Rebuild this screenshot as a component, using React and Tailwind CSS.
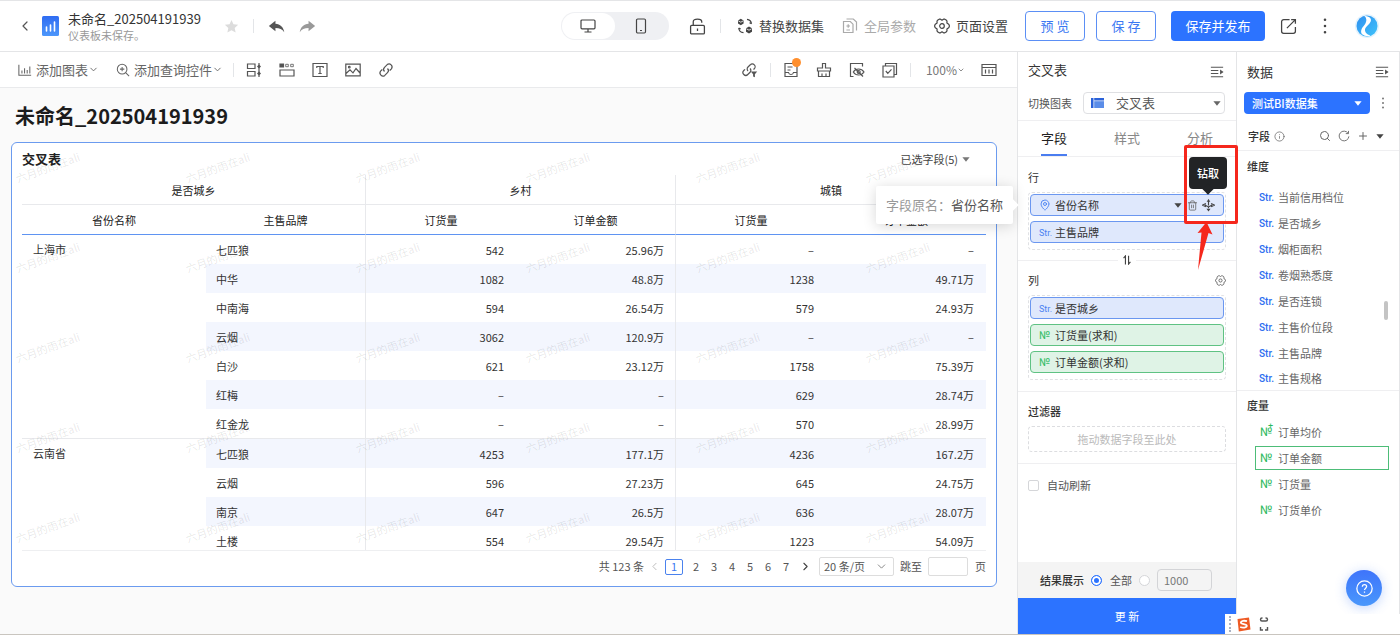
import React, { useState } from 'react';
import { ChevronDown, ChevronLeft, ChevronRight, Search, Plus, MapPin, Trash2, Info } from 'lucide-react';

const rows = [
  ['七匹狼', '542', '25.96万', '–', '–'],
  ['中华', '1082', '48.8万', '1238', '49.71万'],
  ['中南海', '594', '26.54万', '579', '24.93万'],
  ['云烟', '3062', '120.9万', '–', '–'],
  ['白沙', '621', '23.12万', '1758', '75.39万'],
  ['红梅', '–', '–', '629', '28.74万'],
  ['红金龙', '–', '–', '570', '28.99万'],
  ['七匹狼', '4253', '177.1万', '4236', '167.2万'],
  ['云烟', '596', '27.23万', '645', '24.75万'],
  ['南京', '647', '26.5万', '636', '28.07万'],
  ['土楼', '554', '29.54万', '1223', '54.09万'],
];

// first row index -> province and number of rows it covers
const provinces = {
  0: { name: '上海市', span: 7 },
  7: { name: '云南省', span: 4 },
};

const dimensions = ['当前信用档位', '是否城乡', '烟柜面积', '卷烟熟悉度', '是否连锁', '主售价位段', '主售品牌', '主售规格'];
const measures = ['订单均价', '订单金额', '订货量', '订货单价'];
const watermarks = Array.from({ length: 30 }, (_, i) => i);

const Svg = ({ size = 16, className = '', children }) => (
  <svg
    width={size}
    height={size}
    viewBox="0 0 16 16"
    fill="none"
    stroke="currentColor"
    strokeWidth="1.2"
    className={`shrink-0 ${className}`}
    aria-hidden="true"
  >
    {children}
  </svg>
);

const Caret = ({ className = '' }) => (
  <svg width="8" height="5" viewBox="0 0 8 5" fill="currentColor" className={`shrink-0 ${className}`} aria-hidden="true">
    <path d="M0.4 0.3h7.2L4 4.7z" />
  </svg>
);

const GearIcon = ({ size = 16 }) => (
  <Svg size={size}>
    <path d="M5.2 1.2h1.3L8 2.2l1.5-1h1.3l1.7 1 .5 1.1-.1 1.8 1.8 1.2.6 1.1v1.2l-.6 1.1-1.8 1.2.1 1.8-.5 1.1-1.7 1H9.5L8 13.8l-1.5 1H5.2l-1.7-1-.5-1.1.1-1.8-1.8-1.2-.6-1.1V7.400l.6-1.1 1.800-1.200L3 3.300l.5-1.100z" strokeLinejoin="round" />
    <circle cx="8" cy="8" r="2.300" />
  </Svg>
);

const CollapseIcon = () => (
  <Svg size={14}>
    <path d="M1 2.500h14M1 6.200h8.500M1 9.800h8.500M1 13.500h14" />
    <path d="M11.500 5.200v5.600L15.500 8z" fill="currentColor" stroke="none" />
  </Svg>
);

const Divider = () => <span className="h-3.5 w-px shrink-0 bg-[#e3e5e8]" />;

const Header = () => {
  const [device, setDevice] = useState('pc');

  return (
    <header className="flex h-[52px] shrink-0 items-center border-t border-b border-[#e4e5e7] bg-white pr-[21px] pl-[17px] text-[13px] text-[#444]">
      <button aria-label="返回" className="text-[#555]">
        <ChevronLeft size={16} strokeWidth={1.8} />
      </button>
      <svg width="18" height="20" viewBox="0 0 18 20" className="ml-[9px] shrink-0" aria-hidden="true">
        <defs>
          <linearGradient id="doc" x1="0" y1="0" x2="0" y2="1">
            <stop offset="0" stopColor="#2f6cf2" />
            <stop offset="1" stopColor="#4d97fb" />
          </linearGradient>
        </defs>
        <rect width="17" height="20" rx="1.500" fill="url(#doc)" />
        <path d="M4.500 15v-4M8.500 15V9M12.500 15V6" stroke="#fff" strokeWidth="1.600" strokeLinecap="round" />
      </svg>
      <div className="ml-2">
        <h1 className="text-[13px] leading-[17px] whitespace-nowrap text-[#333]">未命名_202504191939</h1>
        <p className="text-[11px] leading-4 text-[#999]">仪表板未保存。</p>
      </div>
      <button aria-label="收藏" className="ml-[23px] text-[#dcdcdc]">
        <Svg size={15}>
          <path d="M8 1l2.100 4.600 5 .6-3.700 3.400 1 4.900L8 12.100l-4.400 2.400 1-4.900L.9 6.200l5-.6z" fill="currentColor" stroke="none" />
        </Svg>
      </button>
      <span className="ml-3.5 flex items-center gap-3.5">
        <Divider />
        <button aria-label="撤销" className="text-[#555]">
          <Svg size={17}>
            <path d="M7 2.500v3c4.500.3 7.500 3 8.300 8-1.800-2.800-4.300-4-8.300-4v3L.8 7.500z" fill="currentColor" stroke="none" />
          </Svg>
        </button>
        <button aria-label="重做" className="text-[#999]">
          <Svg size={17} className="-scale-x-100">
            <path d="M7 2.500v3c4.500.3 7.500 3 8.300 8-1.800-2.800-4.300-4-8.300-4v3L.8 7.500z" fill="currentColor" stroke="none" />
          </Svg>
        </button>
      </span>

      <div className="ml-auto flex items-center">
        <div className="flex h-7 w-[108px] rounded-full bg-[#eff0f3] p-px">
          <button
            aria-label="电脑端"
            onClick={() => setDevice('pc')}
            className={`flex flex-1 items-center justify-center rounded-full ${device === 'pc' ? 'bg-white' : ''}`}
          >
            <Svg>
              <rect x="1" y="2" width="14" height="8.800" rx="1" />
              <path d="M8 11v2.800M4.500 14h7" />
            </Svg>
          </button>
          <button
            aria-label="手机端"
            onClick={() => setDevice('mobile')}
            className={`flex flex-1 items-center justify-center rounded-full ${device === 'mobile' ? 'bg-white' : ''}`}
          >
            <Svg>
              <rect x="3.500" y="1" width="9" height="14" rx="1.200" />
              <path d="M7 12.500h2" />
            </Svg>
          </button>
        </div>
        <button aria-label="锁定" className="ml-5">
          <Svg size={17}>
            <rect x="1.500" y="7" width="13" height="8" rx="1" />
            <path d="M4 7V3.500C4 1.800 5.500 1 8 1s4 .8 4 2.500V4.500M8 9.800v2.400" />
          </Svg>
        </button>
        <span className="ml-3.5 flex">
          <Divider />
        </span>
        <button className="ml-4 flex items-center gap-1.5 whitespace-nowrap">
          <Svg>
            <path d="M1 2.400l2.800-1.600 2.800 1.600v3.200L3.800 7.200 1 5.600zM9 10.200l3-1.700 3 1.700v3.500l-3 1.700-3-1.700z" fill="currentColor" stroke="none" />
            <path d="M1.400 2.900l2.400 1.300 2.400-1.300M9.400 10.800l2.600 1.400 2.600-1.400" stroke="#fff" strokeWidth=".8" />
            <path d="M10 1.300c2.500.3 4.200 1.800 4.500 4.500M14.500 5.800l-2-1M6.500 14.700C4 14.400 2 12.800 1.700 10M1.700 10l2 1" />
          </Svg>
          替换数据集
        </button>
        <button className="ml-[18px] flex items-center gap-1.5 whitespace-nowrap text-[#aaa]">
          <Svg>
            <path d="M1.500 3.500h6.800l2.700 2.700v8.300H1.500zM4.500 1h6.800L14.500 4v8.500M6.200 6.200v3.600M4.400 8H8M4.400 12H8" />
          </Svg>
          全局参数
        </button>
        <button className="ml-[18px] flex items-center gap-1.5 whitespace-nowrap">
          <GearIcon />
          页面设置
        </button>
        <button className="ml-[17px] h-[30px] w-[60px] rounded border border-[#5b8ff5] text-[#3b78f2]">预 览</button>
        <button className="ml-[11px] h-[30px] w-[60px] rounded border border-[#5b8ff5] text-[#3b78f2]">保 存</button>
        <button className="ml-[15px] h-[30px] w-[94px] rounded bg-[#2c73ff] text-white">保存并发布</button>
        <button aria-label="导出" className="ml-[15px]">
          <Svg size={17}>
            <path d="M9 1.500H3.500a2 2 0 0 0-2 2v9a2 2 0 0 0 2 2h9a2 2 0 0 0 2-2V8.500M6.500 9.500l8-8M10.500 1.500h4v4" />
          </Svg>
        </button>
        <button aria-label="更多" className="ml-5">
          <Svg>
            <path d="M8 1.800h.01M8 8h.01M8 14.200h.01" strokeWidth="2.600" strokeLinecap="round" />
          </Svg>
        </button>
        <svg width="24" height="24" viewBox="0 0 24 24" className="ml-[22px] shrink-0" aria-hidden="true">
          <defs>
            <linearGradient id="avatar" x1="0" y1="0" x2="1" y2="1">
              <stop offset="0" stopColor="#2f8ff0" />
              <stop offset="1" stopColor="#3fc3fa" />
            </linearGradient>
          </defs>
          <circle cx="12" cy="12" r="12" fill="#e4f3fd" />
          <circle cx="12" cy="12" r="10.500" fill="url(#avatar)" />
          <path d="M9 1.800c4 .2 8 2 6.800 5.400-1 3-5.600 5.300-5.800 8.300-.2 2.500 1.500 5 5.500 6-2.300 1.200-6 .6-8.300-1.300-2-2-1-5.700 1.500-8.200C11.500 9 12.800 4.500 9 1.800z" fill="#fff" />
        </svg>
      </div>
    </header>
  );
};

const Toolbar = () => (
  <div className="flex h-9 shrink-0 items-center border-b border-[#e9eaec] bg-white pr-5 pl-[18px] text-[13px] whitespace-nowrap text-[#666]">
    <button className="flex items-center">
      <Svg size={14} className="mr-1">
        <path d="M1 2v12h14M4.500 12V8.500M7.500 12V6M10.500 12V8M13.500 12V4" />
      </Svg>
      添加图表
      <ChevronDown size={11} strokeWidth={2} />
    </button>
    <button className="ml-[17px] flex items-center">
      <Svg size={14} className="mr-1">
        <circle cx="7" cy="7" r="5.500" />
        <path d="M11 11l4 4M7 4.500v5M4.500 7h5" />
      </Svg>
      添加查询控件
      <ChevronDown size={11} strokeWidth={2} />
    </button>
    <div className="ml-2.5 flex items-center text-[#555]">
      <Divider />
      <div className="ml-3 flex items-center gap-[17px]">
        <button aria-label="组件">
          <Svg>
            <path d="M1.500 2h7.500v4.500H1.500zM1.500 9.500h7.500V14H1.500zM13 1v14" />
            <path d="M11 4.500l2-2 2 2-2 2zM11 11.500l2-2 2 2-2 2z" fill="currentColor" stroke="none" />
          </Svg>
        </button>
        <button aria-label="标签页">
          <Svg>
            <path d="M1 2h3.500v3H1z" fill="currentColor" />
            <path d="M6.700 2.300h2.600v2.400H6.700zM11.700 2.300h2.600v2.400h-2.600z" strokeWidth=".8" />
            <path d="M1 8h14v6H1z" />
          </Svg>
        </button>
        <button aria-label="文本">
          <Svg>
            <path d="M1 1.500h14v13H1zM4.800 6V4.500h6.400V6M8 4.500v7M6.300 11.500h3.400" />
          </Svg>
        </button>
        <button aria-label="图片">
          <Svg>
            <path d="M.8 2.200h14.400v11.600H.8zM1 11.500l4-3.700 3 3 3-4.300 4 4.500" />
            <circle cx="4.300" cy="5.200" r=".8" />
          </Svg>
        </button>
        <button aria-label="链接">
          <Svg>
            <path d="M6.500 9.500a3 3 0 0 1 0-4.200l2.700-2.700a3 3 0 0 1 4.200 4.200l-1.700 1.700M9.500 6.500a3 3 0 0 1 0 4.200l-2.700 2.700a3 3 0 0 1-4.200-4.200l1.700-1.700" />
          </Svg>
        </button>
      </div>
    </div>

    <div className="ml-auto flex items-center text-[#555]">
      <button aria-label="联动">
        <Svg>
          <path d="M6 9a2.800 2.800 0 0 1 0-4l2.300-2.200a2.800 2.800 0 0 1 4 4L11.500 7.500M8 6.500a2.800 2.800 0 0 1 .3 3.500l-2.500 2.500a2.800 2.800 0 0 1-4-4L3 7.300" />
          <path d="M8.800 9.500h6.400l-2.300 2.800v3l-1.800-.8v-2.200z" fill="currentColor" stroke="none" />
        </Svg>
      </button>
      <span className="mx-3 flex">
        <Divider />
      </span>
      <div className="flex items-center gap-[17px]">
        <button aria-label="待办" className="relative">
          <Svg>
            <path d="M2 1.500h12v13H2zM4.500 5h5M4.500 8h3M2 10.500h3.500c.3 1.500 1.200 2 2.500 2s2.200-.5 2.500-2H14" />
          </Svg>
          <span className="absolute -top-1 -right-0.5 size-[9px] rounded-full bg-[#ff8f2e]" />
        </button>
        <button aria-label="清空">
          <Svg>
            <path d="M6.500 1.500h3v4.500h5v3h-13v-3h5zM2.500 9v5.500h11V9M6 14.500V11.500M10 14.500V11.500" />
          </Svg>
        </button>
        <button aria-label="隐藏项">
          <Svg>
            <path d="M13.500 4.500V1.500h-12v13h3M4.300 10c2.500-4 8-4 10.700 0-2.700 4-8.200 4-10.700 0zM5.500 6l8.500 8.500" />
            <circle cx="9.700" cy="10" r="1.500" />
          </Svg>
        </button>
        <button aria-label="多选">
          <Svg>
            <path d="M1 4h11v11H1zM3.500 4V1.500h11v11H12M3.800 9l2 2.300 3.700-4" />
          </Svg>
        </button>
      </div>
      <span className="ml-3 flex">
        <Divider />
      </span>
      <button className="ml-[15px] flex items-center text-[12px] text-[#777]">
        100%
        <ChevronDown size={8} strokeWidth={2.5} />
      </button>
      <button aria-label="布局" className="ml-4">
        <Svg>
          <path d="M1 2.500h14v11H1zM1 5.500h14M4.500 7.500v4M8 7.500v4M11.500 7.500v4" />
        </Svg>
      </button>
    </div>
  </div>
);

const Pagination = () => (
  <nav aria-label="分页" className="flex h-[31px] shrink-0 items-center justify-end text-[11px] whitespace-nowrap text-[#555]">
    <span>共 123 条</span>
    <button aria-label="上一页" className="ml-1 text-[#bbb]">
      <ChevronLeft size={13} strokeWidth={1.8} />
    </button>
    <button className="mx-1 flex h-4 w-[18px] items-center justify-center rounded-xs border border-[#4a82ee] text-[#3b78f2]">1</button>
    <span className="flex">
      {[2, 3, 4, 5, 6, 7].map((page) => (
        <button key={page} className="w-[18px] text-center">
          {page}
        </button>
      ))}
    </span>
    <button aria-label="下一页" className="ml-1 text-[#444]">
      <ChevronRight size={13} strokeWidth={2} />
    </button>
    <span className="relative ml-[7px] flex items-center">
      <select aria-label="每页条数" className="h-[19px] w-[75px] appearance-none rounded-xs border border-[#ddd] bg-white pl-1 text-[11px]">
        <option>20 条/页</option>
        <option>50 条/页</option>
      </select>
      <ChevronDown size={13} strokeWidth={1.6} className="pointer-events-none absolute right-1.5 text-[#777]" />
    </span>
    <label htmlFor="jump" className="mx-1.5">
      跳至
    </label>
    <input id="jump" className="h-[19px] w-10 rounded-xs border border-[#ddd]" />
    <span className="ml-[7px]">页</span>
  </nav>
);

const CrossTable = () => (
  <section className="relative flex min-h-0 flex-1 flex-col overflow-hidden rounded-md border border-[#6b9bef] bg-white px-2.5 pb-1">
    <div className="flex h-8 shrink-0 items-center justify-between pr-4">
      <h3 className="text-[13px] font-bold text-[#222]">交叉表</h3>
      <button className="flex items-center gap-1 text-[11px] text-[#444]">
        已选字段(5)
        <Caret className="text-[#777]" />
      </button>
    </div>
    <div className="min-h-0 flex-1 overflow-hidden border-b border-[#eeeff1]">
      <table className="w-full table-fixed border-separate border-spacing-0 text-[11px] leading-4 text-[#333]">
        <colgroup>
          <col className="w-[184px]" />
          <col className="w-[160px]" />
          <col className="w-[150px]" />
          <col className="w-[160px]" />
          <col className="w-[150px]" />
          <col className="w-[160px]" />
        </colgroup>
        <thead className="text-center text-[#222]">
          <tr className="h-[30px]">
            <th colSpan={2} className="border-r border-b border-[#e8e9ec] font-normal">是否城乡</th>
            <th colSpan={2} className="border-r border-b border-[#e8e9ec] font-normal">乡村</th>
            <th colSpan={2} className="border-b border-[#e8e9ec] font-normal">城镇</th>
          </tr>
          <tr className="h-[30px]">
            <th className="border-b border-b-[#5f94f2] font-normal">省份名称</th>
            <th className="border-r border-b border-r-[#e8e9ec] border-b-[#5f94f2] font-normal">主售品牌</th>
            <th className="border-b border-b-[#5f94f2] font-normal">订货量</th>
            <th className="border-r border-b border-r-[#e8e9ec] border-b-[#5f94f2] font-normal">订单金额</th>
            <th className="border-b border-b-[#5f94f2] font-normal">订货量</th>
            <th className="border-b border-b-[#5f94f2] font-normal">订单金额</th>
          </tr>
        </thead>
        <tbody>
          {rows.map((row, i) => {
            const stripe = i % 2 === 1 ? 'bg-[#f3f6fe]' : '';
            const split = i === 7 ? 'border-t border-t-[#e8e9ec]' : '';
            return (
              <tr key={i} className={i === 7 ? 'h-[30px]' : 'h-[29px]'}>
                {provinces[i] && (
                  <td rowSpan={provinces[i].span} className={`pt-1.5 pl-[11px] align-top ${split}`}>
                    {provinces[i].name}
                  </td>
                )}
                <td className={`border-r border-r-[#e8e9ec] pl-2.5 ${stripe} ${split}`}>{row[0]}</td>
                <td className={`pr-3 text-right ${stripe} ${split}`}>{row[1]}</td>
                <td className={`border-r border-r-[#e8e9ec] pr-[11px] text-right ${stripe} ${split}`}>{row[2]}</td>
                <td className={`pr-3 text-right ${stripe} ${split}`}>{row[3]}</td>
                <td className={`pr-3 text-right ${stripe} ${split}`}>{row[4]}</td>
              </tr>
            );
          })}
        </tbody>
      </table>
    </div>
    <Pagination />

    {/* Watermark */}
    <div className="pointer-events-none absolute inset-0 overflow-hidden" aria-hidden="true">
      <div className="grid w-max grid-cols-[repeat(6,170px)] text-[11px] whitespace-nowrap text-black/10">
        {watermarks.map((n) => (
          <span key={n} className="flex h-[90px] items-start pt-4 pl-0.5">
            <span className="-rotate-20">六月的雨在ali</span>
          </span>
        ))}
      </div>
    </div>
  </section>
);

const FieldPill = ({ tag, green, children }) => (
  <div
    className={`flex h-[22px] items-center rounded border pl-2 text-[11px] text-[#333] ${
      green ? 'border-[#5fc283] bg-[#dff3e6]' : 'border-[#6b97f0] bg-[#dfe8fc]'
    }`}
  >
    <span className={`w-4 pt-0.5 font-[Roboto] leading-3 ${green ? 'text-[11px] text-[#35bd66]' : 'text-[9px] text-[#4a82f2]'}`}>{tag}</span>
    {children}
  </div>
);

const ConfigPanel = () => {
  const [tab, setTab] = useState('字段');
  const [limit, setLimit] = useState('all');

  return (
    <aside className="relative z-10 flex w-[220px] shrink-0 flex-col border-x border-[#e4e5e7] bg-white text-[11px] text-[#333]">
      <div className="flex h-9 items-center justify-between pr-3 pl-2.5">
        <h2 className="text-[13px]">交叉表</h2>
        <button aria-label="收起配置" className="mt-1 text-[#555]">
          <CollapseIcon />
        </button>
      </div>
      <div className="flex h-[33px] items-start border-b border-[#efeff1] pt-1 pr-[11px] pl-2.5">
        <label htmlFor="chartType" className="mr-[11px] h-[22px] leading-[22px] whitespace-nowrap text-[#555]">
          切换图表
        </label>
        <span className="relative flex flex-1 items-center">
          <svg width="13" height="10" viewBox="0 0 13 10" className="absolute left-2" aria-hidden="true">
            <path d="M0 0h2.500v10H0zM3.200 0H13v2.500H3.200z" fill="#2b62d9" />
            <path d="M3.200 3.200H13V10H3.200z" fill="#5b8de8" />
          </svg>
          <select id="chartType" className="h-[22px] w-full appearance-none rounded border border-[#dfe0e3] pl-8 text-[13px] leading-5 text-[#555]">
            <option>交叉表</option>
            <option>明细表</option>
          </select>
          <Caret className="pointer-events-none absolute right-1 text-[#666]" />
        </span>
      </div>
      <div className="flex h-9 justify-between border-b border-[#efeff1] px-[23px] text-[13px]">
        {['字段', '样式', '分析'].map((name) => (
          <button
            key={name}
            onClick={() => setTab(name)}
            className={`border-b-2 ${tab === name ? 'border-[#4a7df0] text-[#222]' : 'border-transparent text-[#888]'}`}
          >
            {name}
          </button>
        ))}
      </div>

      {/* Rows */}
      <div className="px-2.5 pt-3">
        <h3 className="leading-4">行</h3>
        <div className="relative mt-[7px] space-y-[5px] rounded-sm border border-dashed border-[#e0e1e4] px-px pt-px pb-1.5">
          <div className="relative flex h-[22px] items-center rounded border border-[#6b97f0] bg-[#dfe8fc] pl-2">
            <MapPin size={12} strokeWidth={1.8} className="mr-1 text-[#4a82f2]" />
            省份名称
            <Caret className="ml-auto text-[#444]" />
            <button aria-label="删除" className="ml-[5px] text-[#666]">
              <Trash2 size={11} strokeWidth={1.8} />
            </button>
            <button aria-label="钻取" className="mr-2 ml-1 text-[#444]">
              <Svg size={13}>
                <path d="M8 .5v7.500M8 10v1.500M4.800 5.500L.8 7.500l4 2M11.200 5.500l4 2-4 2M3.500 7.500l4.500 2.300 4.500-2.300" strokeWidth="1.400" />
                <path d="M5.700 3.300h4.600L8 .3zM5.500 12h5L8 15.500z" fill="currentColor" stroke="none" />
              </Svg>
            </button>

            {/* Name hint on the left of the field */}
            <div role="tooltip" className="absolute right-full mr-[18px] rounded-xs bg-white px-2.5 py-2 text-[13px] leading-[22px] whitespace-nowrap shadow-[0_2px_14px_rgba(0,0,0,0.16)]">
              <span className="text-[#999]">字段原名：</span>
              <span className="text-[#555]">省份名称</span>
              <span className="absolute top-1/2 -right-1 size-2 -translate-y-1/2 rotate-45 bg-white" />
            </div>

            {/* Drill button hint */}
            <div role="tooltip" className="absolute -right-1 bottom-full mb-1.5 h-8 w-[38px] rounded bg-[#222426] text-center leading-8 font-medium text-white">
              钻取
              <span className="absolute -bottom-1 left-1/2 size-2 -translate-x-1/2 rotate-45 bg-[#222426]" />
            </div>
            <span className="absolute -right-[15px] -bottom-[9px] h-[79px] w-[54px] rounded-xs border-3 border-[#f5271c]" />
            <svg width="20" height="48" viewBox="0 0 20 48" className="absolute top-[27px] right-2" aria-hidden="true">
              <path d="M11.500 0L17.500 12.500l-4-1.500L3 48 6.500 10.500 2.500 11z" fill="#f5271c" />
            </svg>
          </div>
          <FieldPill tag="Str.">主售品牌</FieldPill>
        </div>
      </div>

      <div className="flex items-center pt-[5px]">
        <span className="h-px flex-1 bg-[#efeff1]" />
        <button aria-label="行列交换" className="mx-1 text-[#444]">
          <Svg size={10}>
            <path d="M5.500 15V1.500L2.500 5M10.500 1v13.500l3-3.500" strokeWidth="1.800" />
          </Svg>
        </button>
        <span className="h-px flex-1 bg-[#efeff1]" />
      </div>

      {/* Columns */}
      <div className="border-b border-[#efeff1] px-2.5 pt-[7px] pb-[11px]">
        <div className="flex items-center justify-between text-[#555]">
          <h3 className="leading-4 text-[#333]">列</h3>
          <button aria-label="列设置">
            <GearIcon size={11} />
          </button>
        </div>
        <div className="mt-[7px] space-y-[5px] rounded-sm border border-dashed border-[#e0e1e4] px-px pt-px pb-1.5">
          <FieldPill tag="Str.">是否城乡</FieldPill>
          <FieldPill tag="№" green>订货量(求和)</FieldPill>
          <FieldPill tag="№" green>订单金额(求和)</FieldPill>
        </div>
      </div>

      {/* Filters */}
      <div className="border-b border-[#efeff1] px-2.5 pt-[11px] pb-[11px]">
        <h3 className="leading-4 font-medium">过滤器</h3>
        <div className="mt-[7px] rounded-sm border border-dashed border-[#dcdde0] text-center leading-6 text-[#bbb]">拖动数据字段至此处</div>
      </div>
      <div className="px-2.5 pt-[11px]">
        <label className="flex items-center gap-2 leading-5 text-[#555]">
          <input type="checkbox" className="size-[11px] appearance-none rounded-xs border border-[#d5d6d9] checked:bg-[#2c73ff]" />
          自动刷新
        </label>
      </div>

      <div className="mt-auto flex h-9 items-center bg-[#f4f4f4] pl-[22px]">
        <span className="mr-[7px] font-medium">结果展示</span>
        <label className="flex items-center gap-2 text-[#555]">
          <input
            type="radio"
            name="limit"
            checked={limit === 'all'}
            onChange={() => setLimit('all')}
            className="size-[11px] appearance-none rounded-full border border-[#d5d6d9] bg-white checked:border-[#2c73ff] checked:bg-[#2c73ff] checked:shadow-[inset_0_0_0_2px_#fff]"
          />
          全部
        </label>
        <input
          type="radio"
          name="limit"
          aria-label="限制条数"
          checked={limit === 'count'}
          onChange={() => setLimit('count')}
          className="ml-[7px] size-[11px] appearance-none rounded-full border border-[#d5d6d9] bg-white checked:border-[#2c73ff] checked:bg-[#2c73ff] checked:shadow-[inset_0_0_0_2px_#fff]"
        />
        <input aria-label="条数" defaultValue="1000" className="ml-[7px] h-[22px] w-[55px] rounded-sm border border-[#d3d4d7] px-1.5 text-[11px] text-[#777]" />
      </div>
      <button className="h-9 shrink-0 bg-[#2c73ff] text-white">更 新</button>
    </aside>
  );
};

const DataPanel = () => (
  <aside className="flex w-[162px] shrink-0 flex-col bg-white text-[11px] text-[#333]">
    <div className="flex h-10 items-center justify-between pr-2.5 pl-2.5">
      <h2 className="text-[13px]">数据</h2>
      <button aria-label="收起数据" className="text-[#555]">
        <CollapseIcon />
      </button>
    </div>
    <div className="flex items-center justify-between pr-3.5 pl-[7px]">
      <button className="flex h-[22px] w-[126px] items-center justify-between rounded-sm bg-[#2c73ff] px-2 font-medium text-white">
        测试BI数据集
        <Caret />
      </button>
      <button aria-label="更多" className="text-[#777]">
        <svg width="4" height="12" viewBox="0 0 4 12" fill="currentColor" aria-hidden="true">
          <circle cx="2" cy="1.500" r="1" />
          <circle cx="2" cy="6" r="1" />
          <circle cx="2" cy="10.500" r="1" />
        </svg>
      </button>
    </div>
    <div className="flex h-[37px] shrink-0 items-center border-b border-[#efeff1] pt-2 pr-[15px] pl-[11px] text-[#666]">
      <h3 className="mr-1 font-medium text-[#333]">字段</h3>
      <Info size={11} strokeWidth={1.6} />
      <div className="ml-auto flex items-center gap-[7px]">
        <button aria-label="搜索">
          <Search size={12} strokeWidth={2} />
        </button>
        <button aria-label="刷新">
          <Svg size={12}>
            <path d="M13.500 4.500A6.500 6.500 0 1 0 14.500 8.500M14 1.200v3.600h-3.600" />
          </Svg>
        </button>
        <button aria-label="新建字段">
          <Plus size={12} strokeWidth={2} />
        </button>
        <button aria-label="展开">
          <Caret className="text-[#444]" />
        </button>
      </div>
    </div>
    <h3 className="pt-[7px] pl-2.5 leading-4 font-medium">维度</h3>
    <div className="relative border-b border-[#efeff1] pt-2.5 text-[#666]">
      <ul>
        {dimensions.map((name, i) => (
          <li key={name} className={`flex items-center pl-[22px] ${i === dimensions.length - 1 ? 'h-6' : 'h-[26px]'}`}>
            <span className="w-[19px] font-[Roboto] text-[10px] font-medium text-[#2c6df0]">Str.</span>
            {name}
          </li>
        ))}
      </ul>
      <span className="absolute right-[11px] bottom-[70px] h-[19px] w-1 rounded-full bg-[#c4c4c4]" />
    </div>
    <h3 className="pt-1.5 pl-2.5 leading-4 font-medium">度量</h3>
    <ul className="mt-1.5 pr-2.5 pl-[18px] text-[#666]">
      {measures.map((name, i) => (
        <li key={name} className="flex h-[26px] items-center">
          <span className={`flex h-6 flex-1 items-center border pl-1 ${i === 1 ? 'border-[#4dbd78]' : 'border-transparent'}`}>
            <span className="relative w-[18px] font-[Roboto] text-[12px] leading-3 text-[#2bb95d]">
              №
              {i === 0 && <span className="absolute -top-1.5 left-2 text-[9px] leading-3">+</span>}
            </span>
            {name}
          </span>
        </li>
      ))}
    </ul>
  </aside>
);

export default function App() {
  return (
    <div className="relative flex h-screen flex-col border-b border-[#c9c5bf] bg-[#fafafa] font-['Noto_Sans_CJK_SC',sans-serif]">
      <Header />
      <div className="flex min-h-0 flex-1">
        <main className="flex min-w-0 flex-1 flex-col">
          <Toolbar />
          <div className="flex min-h-0 flex-1 flex-col pr-5 pb-[47px] pl-[11px]">
            <h2 className="h-[54px] shrink-0 pl-1 text-xl leading-14 font-bold text-[#1c1c1c]">未命名_202504191939</h2>
            <CrossTable />
          </div>
        </main>
        <ConfigPanel />
        <DataPanel />
        <div className="w-px bg-[#e4e5e7]" />
      </div>

      {/* Floating help button */}
      <button aria-label="帮助" className="absolute right-[18px] bottom-7 flex size-9 items-center justify-center rounded-full bg-linear-to-b from-[#3f74fb] to-[#4a97fb] text-white shadow-[0_2px_12px_rgba(60,120,250,0.3)]">
        <Svg size={17}>
          <circle cx="8" cy="8" r="7.200" />
          <path d="M6 6.300c0-2.800 4-2.600 4-.1 0 1.500-2 1.600-2 3.300M8 10.800v1.200" />
        </Svg>
      </button>

      {/* Input method bar */}
      <div className="absolute right-0 bottom-0 z-20 flex h-5 w-[175px] items-center bg-white pl-1">
        <span className="h-4 border-l-2 border-dotted border-[#aab2c4]" />
        <svg width="15" height="15" viewBox="0 0 15 15" className="ml-[5px]" aria-hidden="true">
          <path d="M1.500 2L13 .5l1.500 12L2.800 14.500z" fill="#ee5a24" />
          <path d="M11 4.200c-2.500-.8-6.200-.5-6.200 1.400 0 2 6 1 6 3.200 0 2-4 2.200-6.600 1.200" fill="none" stroke="#fff" strokeWidth="1.800" />
        </svg>
        <svg width="10" height="16" viewBox="0 0 10 16" fill="none" stroke="#555" strokeWidth="1.400" className="ml-2" aria-hidden="true">
          <path d="M3.500 2H3a1.500 1.500 0 0 0 0 3h4a1.500 1.500 0 0 0 0-3h-.5M1.500 11v3H4M8.500 11v3H6" />
        </svg>
      </div>
    </div>
  );
}
